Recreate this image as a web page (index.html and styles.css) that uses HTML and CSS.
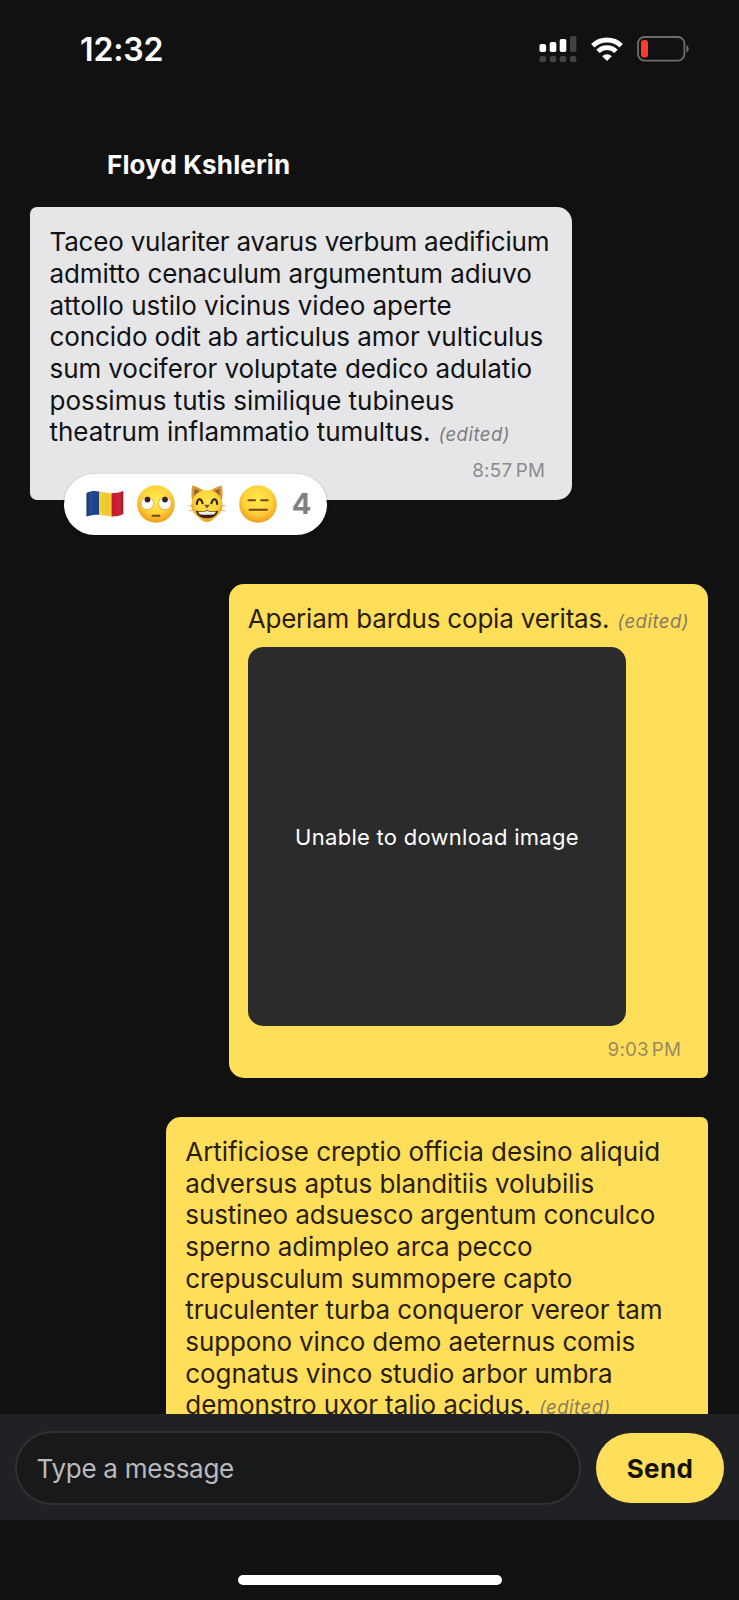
FILE: index.html
```html
<!DOCTYPE html>
<html lang="en">
<head>
<meta charset="utf-8">
<title>Chat</title>
<link rel="stylesheet" href="styles.css">
</head>
<body>
<div class="phone">
  <div class="status">
    <span class="clock">12:32</span>
    <div class="status-icons">
      <svg class="signal" width="38" height="28" viewBox="0 0 38 28">
        <g fill="#fff"><rect x="0.5" y="9" width="6.6" height="8" rx="1.8"/><rect x="10.7" y="7" width="6.6" height="10" rx="1.8"/><rect x="20.7" y="4" width="6.6" height="13" rx="1.8"/></g>
        <g fill="#434343"><rect x="31" y="1" width="6.4" height="16" rx="1.8"/><rect x="0.5" y="21" width="6.6" height="6.2" rx="2"/><rect x="10.7" y="21" width="6.6" height="6.2" rx="2"/><rect x="20.7" y="21" width="6.6" height="6.2" rx="2"/><rect x="31" y="21" width="6.4" height="6.2" rx="2"/></g>
      </svg>
      <svg class="wifi" width="32" height="24" viewBox="0 0 32 24">
        <g fill="none" stroke="#fff" stroke-width="4.8"><path d="M1.8 8.8a20.3 20.3 0 0 1 28.4 0"/><path d="M7 14.400a12.800 12.800 0 0 1 18 0"/></g>
        <path fill="#fff" d="M16 24l-4.800-4.800a6.800 6.800 0 0 1 9.600 0z"/>
      </svg>
      <svg class="battery" width="53" height="26" viewBox="0 0 53 26">
        <rect x="1" y="1" width="46.400" height="23.600" rx="6.500" fill="none" stroke="#6d6d6d" stroke-width="1.800"/>
        <rect x="4" y="4" width="7" height="17.600" rx="3" fill="#ff3b30"/>
        <path fill="#6d6d6d" d="M49.400 8.800a4.600 4.600 0 0 1 0 8z"/>
      </svg>
    </div>
  </div>
  <header class="header"><h1 class="name">Floyd Kshlerin</h1></header>

  <main class="chat">
    <article class="bubble received">
      <p class="text">
        <span class="line tightest">Taceo vulariter avarus verbum aedificium</span>
        <span class="line">admitto cenaculum argumentum adiuvo</span>
        <span class="line loose">attollo ustilo vicinus video aperte</span>
        <span class="line">concido odit ab articulus amor vulticulus</span>
        <span class="line">sum vociferor voluptate dedico adulatio</span>
        <span class="line loose">possimus tutis similique tubineus</span>
        <span class="row"><span class="line loose">theatrum inflammatio tumultus.</span><em class="edited">(edited)</em></span>
      </p>
      <time class="time">8:57 PM</time>
      <div class="reactions">
        <svg width="38" height="38" viewBox="0 0 38 38">
          <defs>
            <clipPath id="flag"><path d="M.5 8C7 4.500 12 6.200 19 7.500s12 .8 18.300-1.500V29c-6 3-12 3-18.300 1.600S7 29.500.5 31.600z"/></clipPath>
            <linearGradient id="wave"><stop offset="0" stop-color="#000" stop-opacity=".3"/><stop offset=".2" stop-color="#fff" stop-opacity=".04"/><stop offset=".55" stop-color="#000" stop-opacity=".06"/><stop offset=".8" stop-color="#fff" stop-opacity=".03"/><stop offset="1" stop-color="#000" stop-opacity=".25"/></linearGradient>
          </defs>
          <g clip-path="url(#flag)"><path fill="#143c8c" d="M0 0h13v38H0z"/><path fill="#fbd42f" d="M13 0h12.500v38H13z"/><path fill="#c9152b" d="M25.500 0H38v38H25.500z"/><path fill="url(#wave)" d="M0 0h38v38H0z"/></g>
        </svg>
        <svg width="38" height="38" viewBox="0 0 38 38">
          <defs><radialGradient id="face" cx=".5" cy=".38" r=".62"><stop offset="0" stop-color="#ffe94f"/><stop offset=".6" stop-color="#ffd33a"/><stop offset="1" stop-color="#ee9a1c"/></radialGradient></defs>
          <circle cx="19" cy="19" r="18.800" fill="url(#face)"/>
          <circle cx="10.300" cy="18.300" r="6.300" fill="#fff" stroke="#c79b45" stroke-width=".7"/><circle cx="28" cy="18.300" r="6.300" fill="#fff" stroke="#c79b45" stroke-width=".7"/>
          <circle cx="10.500" cy="14.600" r="2.900" fill="#38241c"/><circle cx="28" cy="14.600" r="2.900" fill="#38241c"/>
          <path d="M15.500 30.800h7" stroke="#764113" stroke-width="2" stroke-linecap="round"/>
        </svg>
        <svg width="38" height="38" viewBox="0 0 38 38">
          <path fill="#d99a35" d="M4.300.5c-1 5-1.200 9-.3 15l13-9C12 3 8 1 4.300.5zM33.700.5c1 5 1.200 9 .3 15l-13-9C26 3 30 1 33.700.5z"/>
          <path fill="#94602c" d="M6.500 4c-.5 3 0 5-.2 7l5.700-4.500C10 5 8 4.300 6.500 4zM31.500 4c.5 3 0 5 .2 7L26 6.500C28 5 30 4.300 31.500 4z"/>
          <path fill="url(#face)" d="M19 5c9 0 14.800 5.500 15.600 14.500.8 6-4.600 11.500-8.600 14-4.500 4.800-9.500 4.800-14 0-4-2.500-9.400-8-8.600-14C4.200 10.500 10 5 19 5z"/>
          <g fill="none" stroke="#34231b" stroke-width="2.200" stroke-linecap="round"><path d="M8.800 19c.8-6 4.200-6.400 5.800-.8M29.200 19c-.8-6-4.200-6.400-5.800-.8"/></g>
          <path fill="#7b5640" d="M16 19.800h6L19 23.400z"/>
          <path fill="#35211b" d="M8 25.500c3 1.600 8 1.400 11-.5 3 1.900 8 2.100 11 .5-.5 5-5 7.800-11 7.800S8.500 30.500 8 25.500z"/>
          <path fill="#f4eee4" d="M10 26.800c3 .6 6.500.4 9-1 2.500 1.400 6 1.600 9 1l-1.500 2.400c-4.500.9-10.500.9-15 0z"/>
          <path d="M.4 20.600l6 .8M1 26l5.300-1.400M37.600 20.600l-6 .8M37 26l-5.300-1.400" stroke="#b99352" stroke-width=".7"/>
        </svg>
        <svg width="38" height="38" viewBox="0 0 38 38">
          <circle cx="19" cy="19" r="18.800" fill="url(#face)"/>
          <path d="M9.500 15.200h6.500M22.200 15.200h6.500M10.500 24.800h17.500" stroke="#754312" stroke-width="2.100" stroke-linecap="round"/>
        </svg>
        <span class="count">4</span>
      </div>
    </article>

    <article class="bubble sent with-image">
      <p class="text"><span class="row"><span class="line tightest">Aperiam bardus copia veritas.</span><em class="edited">(edited)</em></span></p>
      <div class="image"><span class="image-note">Unable to download image</span></div>
      <time class="time">9:03 PM</time>
    </article>

    <article class="bubble sent long">
      <p class="text">
        <span class="line">Artificiose creptio officia desino aliquid</span>
        <span class="line">adversus aptus blanditiis volubilis</span>
        <span class="line tight">sustineo adsuesco argentum conculco</span>
        <span class="line tight">sperno adimpleo arca pecco</span>
        <span class="line">crepusculum summopere capto</span>
        <span class="line">truculenter turba conqueror vereor tam</span>
        <span class="line tight">suppono vinco demo aeternus comis</span>
        <span class="line">cognatus vinco studio arbor umbra</span>
        <span class="row"><span class="line">demonstro uxor talio acidus.</span><em class="edited">(edited)</em></span>
      </p>
    </article>
  </main>

  <footer class="composer">
    <div class="field"><span class="hint">Type a message</span></div>
    <button class="send">Send</button>
  </footer>
  <div class="home"><span class="home-bar"></span></div>
</div>
</body>
</html>
```
FILE: styles.css
```css
* { box-sizing: border-box; }
body { margin: 0; background: #111; font-family: Inter, "Liberation Sans", sans-serif; }
.phone { width: 739px; height: 1600px; display: flex; flex-direction: column; overflow: hidden; background: #111; }

.status { height: 100px; display: flex; justify-content: space-between; align-items: center; padding: 0 49.5px 1px 80px; }
.clock { font-size: 32px; font-weight: 600; color: #fff; line-height: 40px; letter-spacing: -.13px; white-space: nowrap; }
.status-icons { display: flex; align-items: center; gap: 14px; padding-bottom: 1.6px; }

.header { height: 107px; padding: 48px 0 0 107px; }
.name { margin: 0; font-size: 26px; line-height: 34px; font-weight: 700; letter-spacing: .13px; color: #fff; white-space: nowrap; }

.chat { height: 1207px; display: flex; flex-direction: column; padding: 0 30.7px 0 30.3px; overflow: hidden; }
.bubble { position: relative; flex: none; display: flex; flex-direction: column; padding: 19.2px 19.2px 0; }
.received { width: 542.2px; height: 293.4px; background: #e6e6e8; color: #111214; border-radius: 7px 15px 15px 7px; }
.sent { align-self: flex-end; background: #ffdf5a; color: #2b1d0c; }
.with-image { width: 479.8px; height: 494.6px; margin-top: 83.4px; border-radius: 15px 15px 7px 15px; }
.long { width: 542.2px; height: 380px; margin-top: 38.3px; border-radius: 15px 7px 7px 15px; }

.text { margin: 0; font-size: 26px; line-height: 31.7px; }
.line { display: block; white-space: nowrap; letter-spacing: -.08px; }
.loose { letter-spacing: -.02px; }
.tight { letter-spacing: -.13px; }
.tightest { letter-spacing: -.2px; }
.row { display: flex; align-items: baseline; gap: 8px; }
.edited { font-size: 18.5px; line-height: 31px; letter-spacing: .51px; color: #7d7d80; white-space: nowrap; }
.time { align-self: flex-end; font-size: 18.8px; line-height: 24px; margin: 9px 8px 0 0; letter-spacing: .35px; word-spacing: -2.6px; color: #8b8b8d; white-space: nowrap; }
.sent .edited { color: #897b60; }
.sent .time { margin-top: 11.5px; letter-spacing: .2px; color: #9a8961; }

.reactions { position: absolute; left: 34px; top: 267px; width: 263px; height: 60.5px; border-radius: 31px; background: #fff; display: flex; align-items: center; gap: 13px; padding: 0 16px 0 21.5px; box-shadow: 0 1px 3px rgba(0, 0, 0, .25); }
.reactions svg { flex: none; }
.count { font-size: 29px; font-weight: 700; color: #808080; line-height: 38px; margin-left: 2px; }

.image { width: 378.5px; height: 379.3px; margin-top: 9.9px; border-radius: 15px; background: #2b2b2b; display: flex; align-items: center; justify-content: center; }
.image-note { color: #fff; font-size: 22px; letter-spacing: .27px; white-space: nowrap; }

.composer { height: 106px; background: #202124; display: flex; align-items: center; gap: 15px; padding: 2px 15px 0 15px; }
.field { flex: 1; height: 74px; border: 2px solid #2f3032; border-radius: 37px; background: #18191b; display: flex; align-items: center; padding-left: 19.5px; }
.hint { font-size: 26px; letter-spacing: -.26px; color: #b9babb; white-space: nowrap; }
.send { width: 128px; height: 70px; border: 0; border-radius: 35px; background: #ffdf5a; color: #171104; font: 700 26px Inter, sans-serif; letter-spacing: .4px; padding: 0; }

.home { flex: 1; display: flex; align-items: flex-end; justify-content: center; padding-bottom: 15px; }
.home-bar { width: 264px; height: 10px; border-radius: 5px; background: #fff; }
```
